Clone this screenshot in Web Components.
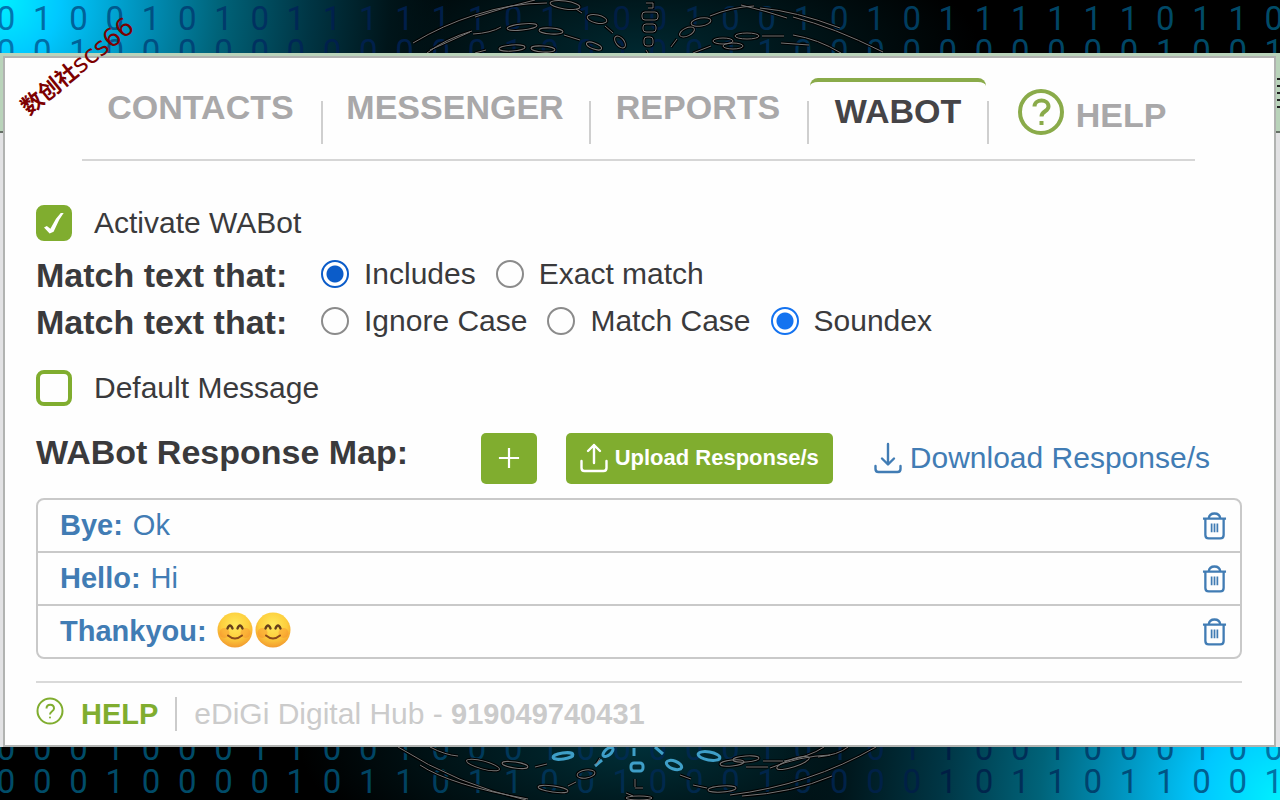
<!DOCTYPE html>
<html lang="en">
<head>
<meta charset="utf-8">
<meta name="viewport" content="width=device-width, initial-scale=1">
<title>WABot</title>
<style>
  body {
    margin: 0;
    background: #000;
    color: #3a3a3c;
    font-family: "Liberation Sans", Arial, sans-serif;
    font-size: 30px;
    --green: #80ad2f;
    --olive: #8aab4a;
    --link: #417cb4;
    --line: #c9c9c9;
    --muted: #a9a8a9;
  }
  wabot-app {
    min-height: 100vh;
  }
</style>
</head>
<body>
<wabot-app></wabot-app>

<script>
const ICONS = {
  help: `<svg viewBox="0 0 46 46" fill="none" stroke="currentColor">
    <circle cx="23" cy="23" r="21" stroke-width="4"/>
    <path d="M16.500 17.500c0-8 14-8 14 0 0 5-7 4.500-7 10" stroke-width="4"/>
    <rect x="21.500" y="32" width="4" height="4" fill="currentColor" stroke="none"/></svg>`,
  helpThin: `<svg viewBox="0 0 28 28" fill="none" stroke="currentColor">
    <circle cx="14" cy="14" r="12.500" stroke-width="2"/>
    <path d="M10.500 11.500c0-5 7.500-5 7.500 0 0 3-4 2.500-4 6" stroke-width="2"/>
    <circle cx="14" cy="20.500" r="1" fill="currentColor" stroke="none"/></svg>`,
  plus: `<svg viewBox="0 0 24 24" fill="none" stroke="currentColor" stroke-width="2.400"><path d="M12 1v22M1 12h22"/></svg>`,
  upload: `<svg viewBox="0 0 28 30" fill="none" stroke="currentColor" stroke-width="2.400" stroke-linecap="round" stroke-linejoin="round">
    <path d="M14 20V2M8 8l6-6 6 6M1.500 18v7q0 3 3 3h19q3 0 3-3v-7"/></svg>`,
  download: `<svg viewBox="0 0 28 32" fill="none" stroke="currentColor" stroke-width="2.400" stroke-linecap="round" stroke-linejoin="round">
    <path d="M14 2v20M8 16.500l6 6 6-6M1.500 24v3q0 3 3 3h19q3 0 3-3v-3"/></svg>`,
  trash: `<svg viewBox="0 0 26 30" fill="none" stroke="currentColor" stroke-width="2.400">
    <path d="M1 8h24M7 7.500c1-6.500 11-6.500 12 0M3.500 8v17q0 3.500 3.500 3.500h12q3.500 0 3.500-3.500V8"/>
    <path d="M10 13v9M13 13v9M16 13v9" stroke-width="1.800"/></svg>`,
  smile: `<svg viewBox="0 0 36 36" fill="none" stroke-linecap="round">
    <defs><radialGradient id="face" cx=".5" cy=".35" r=".65">
      <stop offset="0" stop-color="#ffe95c"/><stop offset=".6" stop-color="#fdcf3d"/><stop offset="1" stop-color="#f29a2e"/>
    </radialGradient></defs>
    <circle cx="18" cy="18" r="17.500" fill="url(#face)"/>
    <circle cx="7.500" cy="21" r="5" fill="#f57c2c" opacity=".35"/><circle cx="28.500" cy="21" r="5" fill="#f57c2c" opacity=".35"/>
    <path d="M10.500 16.500q2.500-6 5 0M20.500 16.500q2.500-6 5 0" stroke="#66401c" stroke-width="2.400"/>
    <path d="M11 23.500q7 6 14 0" stroke="#8b4a1b" stroke-width="2"/></svg>`
}

customElements.define('app-icon', class extends HTMLElement {
  constructor() {
    super()
    this.attachShadow({ mode: 'open' })
  }
  connectedCallback() {
    this.shadowRoot.innerHTML = `
    <style>
      :host{
        display:block;
        flex:none;
        width:28px;
      }
      svg{
        display:block;
        width:100%;
      }
    </style>
    ${ICONS[this.getAttribute('name')]}`
  }
})

// backdrop strips: rows of binary digits fading from one colour to another
const STRIPS = {
  top: {
    rows: ['010010101111110110010010101111110110', '001000000000001001001100000000001001'],
    colors: [[0, 118, 176], [0, 32, 76], [0, 30, 68], [0, 66, 100], [0, 76, 104]],
    art: `<path d="M413 43q30-18 62-28 36-12 72-12M475 17q30-10 60-17M427 53q18-14 45-22M430 50l40-18M473 34q18-1 28-7M576 9l6 4M564 35l16 5M605 26l8 7M671 47l6-8M710 16q22-9 44-10M760 8q35 3 80 20M762 36h22M781 43l28 2M793 35q25 4 48 18M741 5q25 6 46 13M793 17q40 10 90 35M693 53l18-7M475 53l11-3M646 50l2 3"/>
      <ellipse cx="565" cy="5" rx="15" ry="4" transform="rotate(8 565 5)"/>
      <ellipse cx="597" cy="19" rx="10" ry="4" transform="rotate(12 597 19)"/>
      <ellipse cx="522" cy="27" rx="15" ry="3" transform="rotate(-6 522 27)"/>
      <ellipse cx="551" cy="31" rx="12" ry="3" transform="rotate(4 551 31)"/>
      <ellipse cx="512" cy="48" rx="13" ry="3" transform="rotate(-4 512 48)"/>
      <ellipse cx="543" cy="49" rx="12" ry="3" transform="rotate(4 543 49)"/>
      <ellipse cx="594" cy="46" rx="8" ry="3" transform="rotate(20 594 46)"/>
      <ellipse cx="620" cy="42" rx="7" ry="4" transform="rotate(50 620 42)"/>
      <ellipse cx="701" cy="22" rx="10" ry="4" transform="rotate(-10 701 22)"/>
      <ellipse cx="687" cy="32" rx="8" ry="4" transform="rotate(-25 687 32)"/>
      <ellipse cx="723" cy="41" rx="10" ry="3"/>
      <ellipse cx="733" cy="46" rx="10" ry="3"/>
      <ellipse cx="747" cy="36" rx="12" ry="3"/>
      <rect x="642" y="12" width="16" height="8" rx="3"/>
      <rect x="643" y="24" width="13" height="8" rx="3"/>
      <rect x="644" y="37" width="9" height="9" rx="3"/>
      <path d="M646 3h7v5h-5"/>`
  },
  bottom: {
    rows: ['000100011001000100000101011001000100', '000100001011011001000100001011011001'],
    colors: [[0, 76, 104], [0, 74, 104], [0, 42, 78], [0, 30, 68], [0, 114, 166]],
    art: `<path d="M398 0q60 38 128 53M420 18q30 20 108 34M430 0q15 8 28 9M535 20l12-3M595 19l5-8M680 28l11 4M693 38l14 3M568 39l8-4M763 14h20M746 20h22M784 14q25-4 40-14M818 10q20-2 30-10M770 21q30-12 60-13M730 48q80-10 146-48M742 49q50-3 90-20M626 46l7 3M635 32v8M635 41h8"/>
      <ellipse cx="483" cy="18" rx="17" ry="4" transform="rotate(15 483 18)"/>
      <ellipse cx="515" cy="18" rx="13" ry="3" transform="rotate(8 515 18)"/>
      <ellipse cx="586" cy="27" rx="9" ry="4" transform="rotate(-8 586 27)"/>
      <ellipse cx="553" cy="42" rx="15" ry="3" transform="rotate(8 553 42)"/>
      <ellipse cx="722" cy="42" rx="14" ry="3" transform="rotate(-4 722 42)"/>
      <ellipse cx="746" cy="12" rx="13" ry="3" transform="rotate(-4 746 12)"/>
      <ellipse cx="732" cy="16" rx="12" ry="3" transform="rotate(-6 732 16)"/>
      <ellipse cx="793" cy="16" rx="17" ry="4" transform="rotate(-18 793 16)"/>
      <ellipse cx="639" cy="51" rx="13" ry="2"/>
      <g stroke="#3f9fc8"><ellipse cx="563" cy="9" rx="10" ry="3" transform="rotate(-8 563 9)"/>
      <ellipse cx="608" cy="5" rx="6" ry="3" transform="rotate(-40 608 5)"/>
      <ellipse cx="674" cy="18" rx="8" ry="4" transform="rotate(20 674 18)"/>
      <ellipse cx="709" cy="9" rx="11" ry="4" transform="rotate(10 709 9)"/>
      <rect x="631" y="16" width="12" height="8" rx="3"/><path d="M595 19l7-6M634 1v8M655 0l8 7"/></g>`
  }
}

customElements.define('digit-strip', class extends HTMLElement {
  constructor() {
    super()
    this.attachShadow({ mode: 'open' })
  }
  connectedCallback() {
    const strip = STRIPS[this.getAttribute('side')]
    this.shadowRoot.innerHTML = `
    <style>
      :host{
        display:flex;
        flex-direction:column;
        position:relative;
        overflow:hidden;
        height:53px;
        background:
          radial-gradient(circle at 0 0, #00f0ff 0, #00c8ff 60px, #0093bd 140px, #006379 220px, #003544 310px, #00151a 390px, transparent 450px),
          radial-gradient(ellipse 340px 130px at 50% 100%, #002830, transparent);
      }
      :host([side=bottom]){
        justify-content:flex-end;
        background:
          radial-gradient(circle at 100% 100%, #00f0ff 0, #00c8ff 80px, #0093bd 160px, #006379 240px, #003544 340px, #00151a 440px, transparent 500px),
          radial-gradient(ellipse 340px 130px at 50% 0, #002f38, transparent);
      }
      .rows{
        flex:none;
        padding:2px 0;
      }
      .row{
        display:grid;
        grid-template-columns:repeat(36, 1fr);
        margin:0 -12px;
        font:33px/33px Roboto, "Liberation Sans", sans-serif;
        text-align:center;
      }
      svg{
        position:absolute;
        top:0;
        left:50%;
        width:1280px;
        height:53px;
        margin-left:-640px;
      }
    </style>
    <div class="rows"></div>
    <svg viewBox="0 0 1280 53" fill="none">
      <g stroke="#000" stroke-width="3">${strip.art}</g>
      <g stroke="#757575">${strip.art}</g>
    </svg>`
    const rows = this.shadowRoot.querySelector('.rows')
    strip.rows.forEach(digits => {
      const row = document.createElement('div')
      row.className = 'row'
      for (let i = 0; i < digits.length; i++) {
        const span = document.createElement('span')
        span.textContent = digits[i]
        span.style.color = this.mix(strip.colors, i / (digits.length - 1))
        row.append(span)
      }
      rows.append(row)
    })
  }
  mix(colors, t) {
    const at = t * (colors.length - 1)
    const i = Math.min(Math.floor(at), colors.length - 2)
    const rgb = colors[i].map((c, n) => Math.round(c + (colors[i + 1][n] - c) * (at - i)))
    return `rgb(${rgb})`
  }
})

customElements.define('panel-card', class extends HTMLElement {
  constructor() {
    super()
    this.attachShadow({ mode: 'open' }).innerHTML = `
    <style>
      :host{
        display:flex;
        padding:3px 4px 0 3px;
        background:
          repeating-linear-gradient(#222 0 2px, #b9d3ba 2px 7px) right 25px/3px 30px no-repeat,
          linear-gradient(#b9d3ba 78px, #667066 78px, #667066 80px, #e2e2e4 80px);
      }
      .card{
        flex:1;
        min-width:0;
        padding:20px 32px 0 31px;
        border:2px solid #b1b3b1;
        background:#fefefe;
      }
    </style>
    <div class="card"><slot></slot></div>`
  }
})

customElements.define('nav-tabs', class extends HTMLElement {
  constructor() {
    super()
    this.attachShadow({ mode: 'open' }).innerHTML = `
    <style>
      :host{
        display:block;
        margin:0 47px 0 46px;
        border-bottom:2px solid #d6d6d6;
      }
      nav{
        display:grid;
        grid-template-columns:241fr 268fr 218fr 180fr 206fr;
        padding-bottom:15px;
      }
      ::slotted(*){
        min-width:0;
      }
    </style>
    <nav><slot></slot></nav>`
  }
})

customElements.define('nav-tab', class extends HTMLElement {
  constructor() {
    super()
    this.attachShadow({ mode: 'open' }).innerHTML = `
    <style>
      :host{
        display:block;
        background:linear-gradient(#cfcfcf, #cfcfcf) right bottom/2px 43px no-repeat;
      }
      :host(:last-child){
        background:none;
      }
      a{
        display:flex;
        align-items:center;
        justify-content:center;
        gap:12px;
        box-sizing:border-box;
        height:66px;
        padding:0 4px 12px 0;
        border-top:4px solid transparent;
        color:var(--muted);
        font-size:34px;
        font-weight:bold;
        line-height:40px;
        text-decoration:none;
      }
      :host([active]) a{
        margin:0 3px 0 1px;
        padding:0 0 4px;
        border-color:var(--olive);
        border-radius:8px 8px 0 0;
        color:#454447;
      }
      :host([icon]) a{
        padding:3px 0 0;
      }
      app-icon{
        width:46px;
        padding-bottom:5px;
        color:var(--olive);
      }
    </style>
    <a href="#"><slot></slot></a>`
  }
  connectedCallback() {
    const icon = this.getAttribute('icon')
    if (icon) {
      const el = document.createElement('app-icon')
      el.setAttribute('name', icon)
      this.shadowRoot.querySelector('a').prepend(el)
    }
  }
})

customElements.define('check-field', class extends HTMLElement {
  constructor() {
    super()
    this.attachShadow({ mode: 'open' }).innerHTML = `
    <style>
      :host{
        display:flex;
        align-items:center;
        gap:22px;
        line-height:36px;
      }
      input{
        display:grid;
        appearance:none;
        box-sizing:border-box;
        width:36px;
        height:36px;
        margin:0;
        border:4px solid var(--green);
        border-radius:8px;
      }
      input:checked{
        background:var(--green);
      }
      input:checked::before{
        content:"";
        place-self:center;
        width:20px;
        height:21px;
        background:#fff;
        clip-path:polygon(0 72%, 14% 64%, 32% 77%, 60% 30%, 84% 2%, 100% 0, 76% 34%, 48% 92%, 28% 100%);
      }
    </style>
    <input type="checkbox" id="box">
    <label for="box"><slot></slot></label>`
  }
  connectedCallback() {
    this.shadowRoot.querySelector('input').checked = this.hasAttribute('checked')
  }
})

customElements.define('radio-row', class extends HTMLElement {
  constructor() {
    super()
    this.attachShadow({ mode: 'open' })
  }
  connectedCallback() {
    const options = this.getAttribute('options').split(',')
    const value = this.getAttribute('value')
    this.shadowRoot.innerHTML = `
    <style>
      :host{
        display:block;
      }
      .row{
        display:flex;
        align-items:center;
        gap:20px;
        height:47px;
      }
      .title{
        flex:none;
        width:265px;
        padding-top:4px;
        font-size:34px;
        font-weight:bold;
      }
      .option{
        display:flex;
        align-items:center;
        gap:15px;
        white-space:nowrap;
      }
      input{
        appearance:none;
        box-sizing:border-box;
        width:28px;
        height:28px;
        margin:0;
        border:2px solid #8b8b8b;
        border-radius:50%;
      }
      input:checked{
        border-color:var(--radio, #1473f0);
        background:radial-gradient(circle, var(--radio, #1473f0) 8px, #fff 9px);
      }
    </style>
    <div class="row" role="radiogroup" aria-labelledby="title">
      <span class="title" id="title"><slot></slot></span>
      ${options.map((text, i) => `
      <span class="option">
        <input type="radio" name="match" id="r${i}" ${text === value ? 'checked' : ''}>
        <label for="r${i}">${text}</label>
      </span>`).join('')}
    </div>`
  }
})

customElements.define('map-toolbar', class extends HTMLElement {
  constructor() {
    super()
    this.attachShadow({ mode: 'open' }).innerHTML = `
    <style>
      :host{
        display:flex;
        align-items:center;
        padding-right:32px;
        white-space:nowrap;
      }
      h2{
        flex:1;
        margin:0;
        padding-bottom:12px;
        font-size:34px;
        line-height:40px;
      }
      button{
        display:flex;
        align-items:center;
        justify-content:center;
        gap:7px;
        height:51px;
        margin:0;
        padding:0 14px;
        border:0;
        border-radius:5px;
        background:var(--green);
        color:#fff;
        font:bold 22px "Liberation Sans", Arial, sans-serif;
      }
      .add{
        width:56px;
        margin-right:29px;
        padding:0;
      }
      .add app-icon{
        width:22px;
      }
      a{
        display:flex;
        align-items:center;
        gap:8px;
        margin-left:41px;
        color:var(--link);
        text-decoration:none;
      }
    </style>
    <h2><slot></slot></h2>
    <button class="add" aria-label="Add response"><app-icon name="plus"></app-icon></button>
    <button><app-icon name="upload"></app-icon>Upload Response/s</button>
    <a href="#"><app-icon name="download"></app-icon>Download Response/s</a>`
  }
})

customElements.define('response-list', class extends HTMLElement {
  constructor() {
    super()
    this.attachShadow({ mode: 'open' }).innerHTML = `
    <style>
      :host{
        display:block;
        border:2px solid var(--line);
        border-radius:8px;
      }
      ::slotted(:not(:last-child)){
        border-bottom:2px solid var(--line);
      }
    </style>
    <slot></slot>`
  }
})

customElements.define('response-item', class extends HTMLElement {
  constructor() {
    super()
    this.attachShadow({ mode: 'open' }).innerHTML = `
    <style>
      :host{
        display:flex;
        align-items:center;
        gap:10px;
        height:51px;
        padding:0 13px 0 22px;
        color:var(--link);
        font-size:29px;
      }
      .reply{
        display:flex;
        flex:1;
        gap:2px;
      }
      button{
        padding:0;
        border:0;
        background:none;
        color:inherit;
      }
      button app-icon{
        width:25px;
      }
    </style>
    <b class="key"></b>
    <span class="reply"><slot></slot></span>
    <button aria-label="Delete"><app-icon name="trash"></app-icon></button>`
  }
  connectedCallback() {
    this.shadowRoot.querySelector('.key').textContent = this.getAttribute('key') + ':'
  }
})

customElements.define('panel-footer', class extends HTMLElement {
  constructor() {
    super()
    this.attachShadow({ mode: 'open' }).innerHTML = `
    <style>
      :host{
        display:flex;
        align-items:center;
        padding-top:14px;
        border-top:2px solid #d9d9d9;
        color:#cbcbcb;
        line-height:34px;
      }
      a{
        display:flex;
        gap:17px;
        padding-right:17px;
        border-right:2px solid #cbcbcb;
        color:var(--green);
        font-size:29px;
        font-weight:bold;
        text-decoration:none;
      }
      p{
        margin:0 0 0 17px;
      }
      ::slotted(b){
        font-size:29px;
      }
    </style>
    <a href="#"><app-icon name="helpThin"></app-icon>HELP</a>
    <p><slot></slot></p>`
  }
})

customElements.define('corner-mark', class extends HTMLElement {
  constructor() {
    super()
    this.attachShadow({ mode: 'open' }).innerHTML = `
    <style>
      :host{
        position:absolute;
        top:93px;
        left:23px;
        color:#7d0000;
        font:25px/30px "DejaVu Sans", "Noto Sans CJK SC", sans-serif;
        white-space:nowrap;
        transform:rotate(-39deg);
        transform-origin:0 50%;
      }
      b{
        font-family:"Noto Sans CJK SC", sans-serif;
        font-size:22px;
      }
    </style>
    <b>数创社</b>scs66`
  }
})

customElements.define('wabot-app', class extends HTMLElement {
  constructor() {
    super()
    this.attachShadow({ mode: 'open' }).innerHTML = `
    <style>
      :host{
        display:flex;
        flex-direction:column;
        position:relative;
      }
      digit-strip{
        flex:none;
      }
      panel-card{
        flex:1;
      }
      .activate{
        margin:44px 0 9px;
      }
      .includes{
        --radio:#0b5cc9;
      }
      .default{
        margin:26px 0 26px;
      }
      response-list{
        margin:14px 0 22px;
      }
      .emoji{
        width:36px;
        padding-bottom:3px;
      }
    </style>
    <digit-strip side="top"></digit-strip>
    <panel-card>
      <nav-tabs>
        <nav-tab>CONTACTS</nav-tab>
        <nav-tab>MESSENGER</nav-tab>
        <nav-tab>REPORTS</nav-tab>
        <nav-tab active>WABOT</nav-tab>
        <nav-tab icon="help">HELP</nav-tab>
      </nav-tabs>
      <check-field class="activate" checked>Activate WABot</check-field>
      <radio-row class="includes" options="Includes,Exact match" value="Includes">Match text that:</radio-row>
      <radio-row options="Ignore Case,Match Case,Soundex" value="Soundex">Match text that:</radio-row>
      <check-field class="default">Default Message</check-field>
      <map-toolbar>WABot Response Map:</map-toolbar>
      <response-list>
        <response-item key="Bye">Ok</response-item>
        <response-item key="Hello">Hi</response-item>
        <response-item key="Thankyou">
          <app-icon class="emoji" name="smile" role="img" aria-label="smiling face"></app-icon>
          <app-icon class="emoji" name="smile" role="img" aria-label="smiling face"></app-icon>
        </response-item>
      </response-list>
      <panel-footer>eDiGi Digital Hub - <b>919049740431</b></panel-footer>
    </panel-card>
    <digit-strip side="bottom"></digit-strip>
    <corner-mark></corner-mark>`
  }
})
</script>
</body>
</html>
